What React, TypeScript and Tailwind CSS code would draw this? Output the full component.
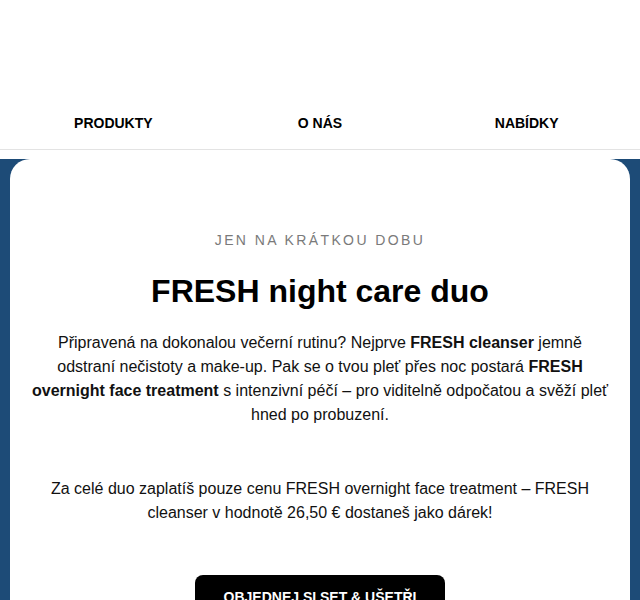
import React from 'react';

const navItems = ['PRODUKTY', 'O NÁS', 'NABÍDKY'];

export default function App() {
  return (
    <div
      className="w-[640px] min-h-[600px] bg-white text-black"
      style={{ fontFamily: '"Liberation Sans", Arial, sans-serif' }}
    >
      {/* header (logo area is empty) */}
      <div className="h-[100px]" />

      <nav className="grid grid-cols-3 h-[50px] px-[10px] border-b border-[#e3e3e3] items-center pb-[4px]">
        {navItems.map((item) => (
          <a key={item} className="text-center text-[14px] font-bold leading-none">
            {item}
          </a>
        ))}
      </nav>

      <div className="mt-[9px] bg-[#1d4b77] px-[10px]">
        <div className="bg-white rounded-t-[20px] px-[20px] pt-[72px] pb-[40px] text-center">
          <p className="text-[14px] tracking-[2.4px] text-[#7a7a7a] leading-[18px]">
            JEN NA KRÁTKOU DOBU
          </p>

          <h1 className="mt-[23px] text-[32px] font-bold leading-[38px]">FRESH night care duo</h1>

          <p className="mt-[21px] text-[16px] leading-[24px] text-[#111]">
            Připravená na dokonalou večerní rutinu? Nejprve <b>FRESH cleanser</b> jemně
            odstraní nečistoty a make-up. Pak se o tvou pleť přes noc postará{' '}
            <b>FRESH overnight face treatment</b> s intenzivní péčí – pro viditelně odpočatou a
            svěží pleť hned po probuzení.
          </p>

          <p className="mt-[50px] text-[16px] leading-[24px] text-[#111]">
            Za celé duo zaplatíš pouze cenu FRESH overnight face treatment – FRESH cleanser v
            hodnotě 26,50 € dostaneš jako dárek!
          </p>

          <div className="mt-[50px] flex justify-center">
            <a className="w-[250px] h-[44px] rounded-[8px] bg-black text-white text-[14px] font-bold flex items-center justify-center">
              OBJEDNEJ SI SET &amp; UŠETŘI
            </a>
          </div>
        </div>
      </div>
    </div>
  );
}
